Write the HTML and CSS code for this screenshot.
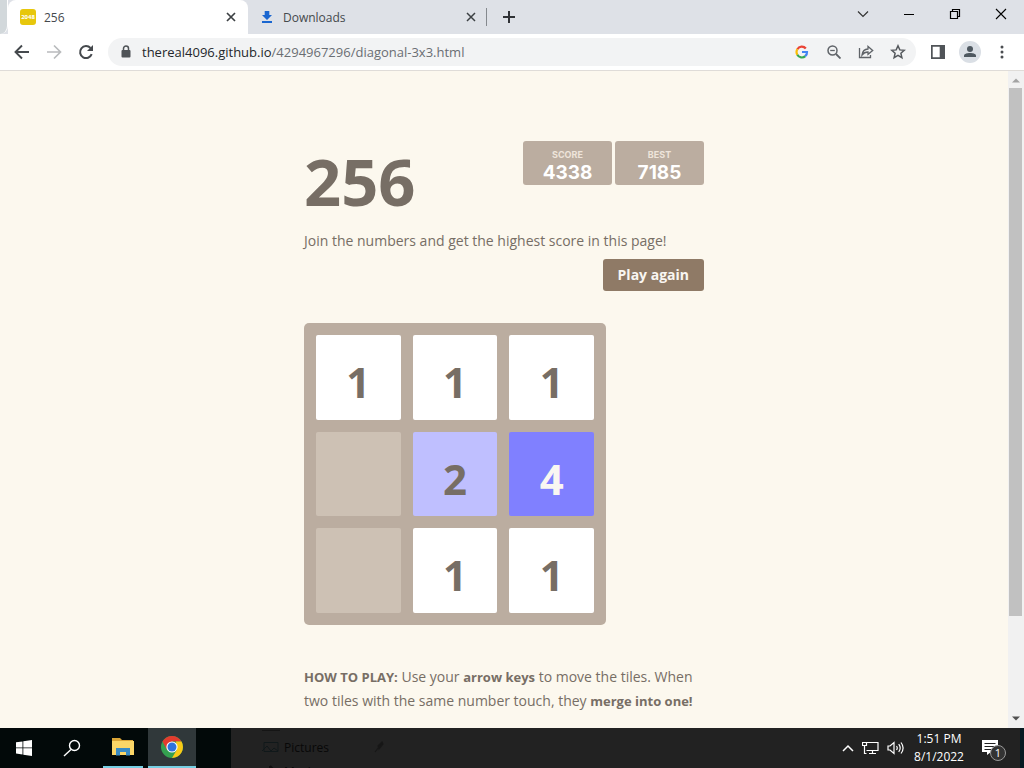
FILE: index.html
```html
<!DOCTYPE html>
<html lang="en">
<head>
<meta charset="utf-8">
<title>256</title>
<link rel="stylesheet" href="styles.css">
</head>
<body>
<header class="tabstrip">
  <div class="edge"></div>
  <div class="tab tab-active">
    <span class="favicon">2048</span>
    <span class="tab-title">256</span>
    <button class="icon-btn close" aria-label="Close tab"><svg width="10" height="10" viewBox="0 0 10 10"><path d="M1 1l8 8M9 1L1 9" stroke="#3c4043" stroke-width="1.7"/></svg></button>
  </div>
  <div class="tab tab-idle">
    <svg class="dl" width="14" height="14" viewBox="0 0 14 14"><path d="M4.700 1h4.600v4H12L7 10 2 5h2.700zM2 11h10v2H2z" fill="#1a66d0"/></svg>
    <span class="tab-title">Downloads</span>
    <button class="icon-btn close" aria-label="Close tab"><svg width="10" height="10" viewBox="0 0 10 10"><path d="M1 1l8 8M9 1L1 9" stroke="#3c4043" stroke-width="1.500"/></svg></button>
  </div>
  <button class="icon-btn new-tab" aria-label="New tab"><svg width="12" height="12" viewBox="0 0 12 12"><path d="M6 0v12M0 6h12" stroke="#303236" stroke-width="2"/></svg></button>
  <div class="window-controls">
    <button class="icon-btn" aria-label="Search tabs"><svg width="12" height="12" viewBox="0 0 12 12"><path d="M1 3.500l5 5 5-5" fill="none" stroke="#333" stroke-width="1.200"/></svg></button>
    <button class="icon-btn" aria-label="Minimize"><svg width="12" height="12" viewBox="0 0 12 12"><path d="M1 6.500h10" stroke="#000"/></svg></button>
    <button class="icon-btn" aria-label="Restore"><svg width="12" height="12" viewBox="0 0 12 12"><path d="M1.500 3.500h7v7h-7zM3.500 3.500v-2h7v7h-2" fill="none" stroke="#000" stroke-width="1.200"/></svg></button>
    <button class="icon-btn" aria-label="Close"><svg width="12" height="12" viewBox="0 0 12 12"><path d="M1 1l10 10M11 1L1 11" stroke="#000" stroke-width="1.100"/></svg></button>
  </div>
</header>

<nav class="toolbar">
  <button class="icon-btn nav" aria-label="Back"><svg width="16" height="16" viewBox="0 0 16 16"><path d="M15 8H2M8 1.500L1.500 8 8 14.500" fill="none" stroke="#45494d" stroke-width="1.900"/></svg></button>
  <button class="icon-btn nav" aria-label="Forward"><svg width="16" height="16" viewBox="0 0 16 16"><path d="M1 8h13M8 1.500L14.500 8 8 14.500" fill="none" stroke="#b9bbbd" stroke-width="1.700"/></svg></button>
  <button class="icon-btn nav" aria-label="Reload"><svg width="16" height="16" viewBox="0 0 16 16"><path d="M13.700 10.200A6 6 0 1 1 12.500 4" fill="none" stroke="#45494d" stroke-width="2"/><path d="M15 1v6H9z" fill="#45494d"/></svg></button>
  <div class="omnibox">
    <svg width="10" height="14" viewBox="0 0 10 14"><path d="M2.500 6V3.500a2.500 2.500 0 0 1 5 0V6" fill="none" stroke="#4f5357" stroke-width="1.500"/><rect x="0.500" y="5" width="9" height="7.500" rx="1" fill="#4f5357"/></svg>
    <a class="url" href="#"><span class="host">thereal4096.github.io</span>/4294967296/diagonal-3x3.html</a>
    <div class="actions">
      <button class="icon-btn" aria-label="Google"><svg width="14" height="14" viewBox="0 0 14 14" fill="none" stroke-width="2.200"><path d="M2.400 4.200A5 5 0 0 1 10.800 3.500" stroke="#ea4335"/><path d="M2.400 4.200a5.200 5.200 0 0 0 0 5.600" stroke="#fbbc05"/><path d="M2.400 9.800a5 5 0 0 0 7.900 1.300" stroke="#34a853"/><path d="M7 7h5a5 5 0 0 1-1.800 4.200" stroke="#4285f4"/></svg></button>
      <button class="icon-btn" aria-label="Zoom"><svg width="14" height="14" viewBox="0 0 14 14" fill="none" stroke="#5f6368"><circle cx="5.500" cy="5.500" r="4.500" stroke-width="1.500"/><path d="M9 9l4.500 4.500" stroke-width="1.800"/><path d="M3.200 5.500h4.600" stroke-width="1.300"/></svg></button>
      <button class="icon-btn" aria-label="Share"><svg width="16" height="14" viewBox="0 0 16 14" fill="none" stroke="#5f6368" stroke-width="1.300"><path d="M1.500 3v9.500h11V10M4 10c.5-4 3-5.800 6-6V1.500L14.700 5.500 10 9.300V7C7.500 7 5.500 8 4 10z"/></svg></button>
      <button class="icon-btn" aria-label="Bookmark"><svg width="16" height="16" viewBox="0 0 16 16"><path d="M8 1.800l1.800 4.100 4.400.4-3.300 3 1 4.400L8 11.400l-3.900 2.300 1-4.400-3.300-3 4.400-.4z" fill="none" stroke="#55595d" stroke-width="1.500"/></svg></button>
    </div>
  </div>
  <button class="icon-btn side" aria-label="Side panel"><svg width="14" height="14" viewBox="0 0 14 14"><path d="M0 0h14v14H0zM1.700 1.700v10.600h7V1.700z" fill="#505458" fill-rule="evenodd"/></svg></button>
  <button class="icon-btn profile" aria-label="Profile"><svg width="22" height="22" viewBox="0 0 22 22"><circle cx="11" cy="11" r="11" fill="#dadfe5"/><circle cx="11" cy="8" r="3" fill="#4e5860"/><path d="M5 16v-1.500c0-3.500 12-3.500 12 0V16z" fill="#4e5860"/></svg></button>
  <button class="icon-btn more" aria-label="Menu"><svg width="4" height="14" viewBox="0 0 4 14" fill="#4a4d51"><circle cx="2" cy="2" r="1.500"/><circle cx="2" cy="7" r="1.500"/><circle cx="2" cy="12" r="1.500"/></svg></button>
</nav>

<div class="viewport">
  <main class="page">
    <div class="container">
      <div class="heading">
        <h1 class="title">256</h1>
        <div class="scores">
          <div class="score"><span class="score-label">SCORE</span><span class="score-value">4338</span></div>
          <div class="score"><span class="score-label">BEST</span><span class="score-value">7185</span></div>
        </div>
      </div>
      <p class="intro">Join the numbers and get the highest score in this page!</p>
      <button class="play">Play again</button>
      <div class="board">
        <div class="cell one">1</div><div class="cell one">1</div><div class="cell one">1</div>
        <div class="cell"></div><div class="cell two">2</div><div class="cell four">4</div>
        <div class="cell"></div><div class="cell one">1</div><div class="cell one">1</div>
      </div>
      <p class="howto"><strong>HOW TO PLAY:</strong> Use your <strong>arrow keys</strong> to move the tiles. When<br>two tiles with the same number touch, they <strong>merge into one!</strong></p>
    </div>
  </main>
  <div class="scrollbar">
    <svg width="8" height="5" viewBox="0 0 8 5"><path d="M0 4.500L4 .5l4 4z" fill="#a3a3a3"/></svg>
    <div class="track"><div class="thumb"></div></div>
    <svg width="8" height="5" viewBox="0 0 8 5"><path d="M0 .5l4 4 4-4z" fill="#505050"/></svg>
  </div>
</div>

<footer class="taskbar">
  <button class="icon-btn task" aria-label="Start"><svg width="16" height="16" viewBox="0 0 16 16" fill="#fff"><path d="M0 2.300l6.500-.9v6.100H0zM7.300 1.300L16 0v7.500H7.300zM0 8.300h6.500v6.200L0 13.600zM7.300 8.300H16V16l-8.700-1.300z"/></svg></button>
  <button class="icon-btn task" aria-label="Search"><svg width="18" height="18" viewBox="0 0 18 18" fill="none" stroke="#fff" stroke-width="1.400"><circle cx="11.500" cy="6.500" r="5"/><path d="M8 10.500L1 17"/></svg></button>
  <button class="icon-btn task open" aria-label="File Explorer"><svg width="22" height="18" viewBox="0 0 22 18"><path d="M0 0h8l2 2h11v3H0z" fill="#dba536"/><path d="M0 3h22v14H0z" fill="#fbd667"/><path d="M4 17.500V10h14v7.500h-4V14H8v3.500z" fill="#398bc4"/></svg></button>
  <button class="icon-btn task open current" aria-label="Chrome"><svg width="24" height="24" viewBox="0 0 24 24"><circle cx="12" cy="12" r="11" fill="#34a050"/><path d="M2.500 6.500A11 11 0 0 1 21.500 6.500H12L7 15z" fill="#e33b2e"/><path d="M21.500 6.500A11 11 0 0 1 12 23l5-8.500-1-8z" fill="#fbc916"/><circle cx="12" cy="12" r="5.600" fill="#fff"/><circle cx="12" cy="12" r="4.500" fill="#2f72dc"/></svg></button>
  <div class="ghost">
    <div class="ghost-line"></div>
    <div class="ghost-row">
      <svg width="17" height="12" viewBox="0 0 17 12"><path d="M2 1.500h14v9H2zM0 10l5-5 4 5 3-3 4 3" fill="none" stroke="#10181a"/></svg>
      <span>Pictures</span>
      <svg class="pin" width="10" height="12" viewBox="0 0 10 12"><path d="M1 11L5 6M4 5l4-4 1 2-4 5z" stroke="#171717" stroke-width="1.200" fill="#171717"/></svg>
    </div>
    <div class="ghost-row"><svg width="17" height="12" viewBox="0 0 17 12"><path d="M8 1v8M8 1l4 4" stroke="#101010" stroke-width="2"/></svg><span>Music</span></div>
  </div>
  <div class="tray">
    <svg width="12" height="8" viewBox="0 0 12 8"><path d="M1 7l5-5 5 5" fill="none" stroke="#fff" stroke-width="1.500"/></svg>
    <svg width="17" height="14" viewBox="0 0 17 14" fill="none" stroke="#fff" stroke-width="1.200"><path d="M5 1.500h11v8H4.500M7 12.500h7M10.500 9.500v3M.5 1.500h4v3h-4zM2.500 4.500v8h2"/></svg>
    <svg width="17" height="14" viewBox="0 0 17 14" fill="none" stroke="#fff" stroke-width="1.200"><path d="M1 5h2l4-3.500v11L3 9H1zM9.500 5q1.500 2 0 4M11.700 3.200q3 3.800 0 7.600M14 1.500q4.200 5.500 0 11"/></svg>
    <div class="clock"><span>1:51 PM</span><span>8/1/2022</span></div>
    <div class="notice">
      <svg width="16" height="16" viewBox="0 0 16 16"><path d="M0 0h16v12H9l-4 3v-3H0z" fill="#fff"/><path d="M2.500 3.500h11M2.500 6.500h11M2.500 9.500h7" stroke="#222"/></svg>
      <span class="badge">1</span>
    </div>
  </div>
</footer>
</body>
</html>
```
FILE: styles.css
```css
* { box-sizing: border-box; }
body {
  margin: 0;
  height: 100vh;
  display: flex;
  flex-direction: column;
  overflow: hidden;
  font-family: "Open Sans", "Noto Sans", sans-serif;
}
svg { display: block; flex: none; }
.icon-btn {
  display: flex;
  align-items: center;
  justify-content: center;
  padding: 0;
  border: 0;
  background: none;
}

.tabstrip { display: flex; height: 34px; flex: none; background: #dee1e7; }
.edge { width: 8px; background: #d2d8db; border-right: 1px solid #fff; border-radius: 0 0 8px 0; }
.tab { display: flex; align-items: center; width: 240px; padding: 0 12px; font-size: 12px; color: #45494d; }
.tab-active { background: #fff; border-radius: 8px 8px 0 0; }
.tab-idle { position: relative; }
.tab-idle::after { content: ""; position: absolute; right: 1px; top: 8px; height: 18px; width: 1px; background: #85898e; }
.favicon {
  width: 16px;
  height: 16px;
  margin-right: 8px;
  border-radius: 3px;
  background: #e7c70c;
  color: #fff;
  font-size: 6px;
  font-weight: 700;
  line-height: 16px;
  text-align: center;
}
.dl { margin-right: 9px; }
.tab-title { flex: 1; }
.close { width: 10px; height: 16px; }
.new-tab { width: 42px; }
.window-controls { display: flex; margin-left: auto; height: 28px; }
.window-controls .icon-btn { width: 46px; }

.toolbar { display: flex; align-items: center; height: 37px; flex: none; padding: 0 6px; background: #fff; border-bottom: 1px solid #dfdcd8; }
.nav { width: 32px; height: 32px; }
.omnibox { display: flex; align-items: center; flex: 1; height: 28px; margin-left: 6px; padding: 0 2px 0 13px; border-radius: 14px; background: #f2f3f4; }
.url { margin-left: 11px; color: #6a6e73; font-size: 13px; text-decoration: none; }
.host { color: #24272b; }
.actions { display: flex; margin-left: auto; }
.actions .icon-btn { width: 32px; height: 28px; }
.side { width: 32px; margin-left: 6px; }
.profile, .more { width: 32px; }

.viewport { display: flex; flex: 1; min-height: 0; background: #fcf8ee; }
.page { flex: 1; overflow: hidden; color: #776e65; }
.container { width: 400px; margin: 0 auto; padding-top: 70px; }
.heading { display: flex; justify-content: space-between; align-items: flex-start; }
.title { margin: 0; padding-top: 8px; font-size: 65px; line-height: 64px; font-weight: 700; }
.scores { display: flex; gap: 3px; }
.score { display: flex; flex-direction: column; align-items: center; width: 89px; height: 44px; padding-top: 7px; border-radius: 3px; background: #bbada0; font-family: Inter, sans-serif; font-weight: 700; }
.score-label { font-size: 9px; line-height: 13px; color: #eee4da; }
.score-value { font-size: 19px; line-height: 23px; color: #fff; }
.intro, .howto { margin: 0; font-size: 14px; line-height: 24px; }
.intro { margin-top: 16px; }
.play { display: block; height: 32px; margin: 6px 0 0 auto; padding: 0 15px; border: 0; border-radius: 3px; background: #8f7a66; color: #f9f6f2; font: 700 14px/32px "Open Sans", sans-serif; }
.board { display: grid; grid-template: repeat(3, 1fr) / repeat(3, 1fr); gap: 12px; width: 302px; aspect-ratio: 1; margin-top: 32px; padding: 12px; border-radius: 5px; background: #bbada0; }
.cell { padding-top: 8px; border-radius: 2px; background: #cdc1b4; font-size: 42px; font-weight: 700; line-height: 78px; text-align: center; }
.one { background: #fff; }
.two { background: #bfbfff; }
.four { background: #8080ff; color: #f9f6f2; }
.cell { min-height: 0; height: 100%; }
.howto { margin-top: 40px; }
.howto strong { font-size: 13px; }
.scrollbar { display: flex; flex-direction: column; align-items: center; width: 16px; padding: 7px 0; background: #f1f1f1; }
.track { flex: 1; align-self: stretch; padding: 5px 2px 0 1px; }
.thumb { height: 84%; background: #c1c1c1; }

.taskbar { display: flex; height: 40px; flex: none; background: #020909; color: #fff; }
.task { width: 48px; }
.open { width: 40px; margin: 0 5px 0 7px; border-bottom: 2px solid #76cfe3; }
.current { width: 48px; margin: 0; background: #30383a; }
.ghost { flex: 1; overflow: hidden; margin-left: 35px; padding: 2px 0 0 31px; background: #222; color: #080808; font-size: 12px; }
.ghost-line { width: 18px; height: 1px; background: #151515; }
.ghost-row { display: flex; align-items: center; height: 16px; margin-top: 8px; gap: 5px; }
.pin { margin-left: 40px; }
.tray { display: flex; align-items: center; gap: 8px; padding-right: 14px; background: #222; border-right: 4px solid #061a22; }
.clock { display: flex; flex-direction: column; width: 54px; font-size: 12px; line-height: 18px; text-align: center; white-space: nowrap; }
.notice { position: relative; width: 24px; margin-left: 8px; }
.badge { position: absolute; left: 8px; top: 5px; width: 16px; height: 16px; border: 1px solid #999; border-radius: 50%; background: #333; font-size: 11px; line-height: 14px; text-align: center; }
```
